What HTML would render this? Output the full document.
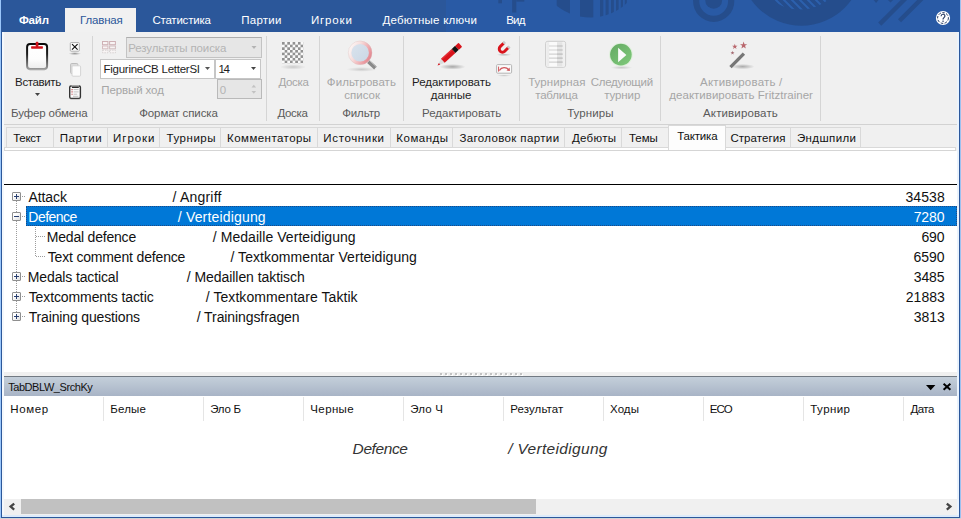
<!DOCTYPE html>
<html>
<head>
<meta charset="utf-8">
<title>TabDBLW_SrchKy</title>
<style>
*{box-sizing:border-box;margin:0;padding:0}
html,body{width:961px;height:519px;overflow:hidden;background:#fff}
body{font-family:"Liberation Sans",sans-serif;font-size:12px;color:#1e1e1e;position:relative}
.a{position:absolute}
.t{position:absolute;white-space:nowrap}
svg{position:absolute;overflow:visible}
.sep{position:absolute;top:36px;width:1px;height:85px;background:#d5d5d5}
.tab{position:absolute;top:127px;height:21px;background:#f0f0f0;border:1px solid #d9d9d9}
.cd{position:absolute;top:397px;width:1px;height:24px;background:#e5e5e5}
</style>
</head>
<body>
<!-- window borders -->
<div class="a" style="left:0;top:0;width:1px;height:519px;background:#9ac6fa"></div>
<div class="a" style="left:1px;top:0;width:1px;height:519px;background:#2b579a"></div>
<div class="a" style="left:2px;top:32px;width:2px;height:485px;background:#f4f8fc"></div>
<div class="a" style="left:957px;top:32px;width:2px;height:485px;background:#eaf3fd"></div>
<div class="a" style="left:959px;top:32px;width:1px;height:487px;background:#2b579a"></div>
<div class="a" style="left:960px;top:0;width:1px;height:519px;background:#9dc1f0"></div>
<!-- header -->
<div class="a" style="left:1px;top:0;width:445px;height:32px;background:#2b579a"></div>
<div class="a" style="left:446px;top:0;width:514px;height:32px;background:#295aa5"></div>
<div class="a" style="left:65px;top:8px;width:71px;height:25px;background:#f1f1f1"></div>
<!-- ribbon -->
<div class="a" style="left:4px;top:32px;width:953px;height:93px;background:#f0f0f0;border-bottom:1px solid #d2d2d2"></div>
<div class="sep" style="left:92px"></div>
<div class="sep" style="left:266px"></div>
<div class="sep" style="left:319px"></div>
<div class="sep" style="left:403px"></div>
<div class="sep" style="left:519px"></div>
<div class="sep" style="left:660px"></div>
<div class="sep" style="left:820px"></div>
<!-- tab strip -->
<div class="a" style="left:4px;top:125px;width:953px;height:26px;background:#f0f0f0"></div>
<div class="a" style="left:5px;top:148px;width:950px;height:2px;background:#fff"></div>
<div class="a" style="left:4px;top:147px;width:1px;height:4px;background:#d9d9d9"></div>
<div class="a" style="left:955px;top:147px;width:1px;height:4px;background:#d9d9d9"></div>
<div class="a" style="left:4px;top:150px;width:952px;height:1px;background:#d5d5d5"></div>
<div class="a" style="left:4px;top:147px;width:952px;height:1px;background:#d9d9d9"></div>
<div class="tab" style="left:6px;width:48px"></div>
<div class="tab" style="left:53px;width:55px"></div>
<div class="tab" style="left:107px;width:53px"></div>
<div class="tab" style="left:159px;width:62px"></div>
<div class="tab" style="left:220px;width:98px"></div>
<div class="tab" style="left:317px;width:74px"></div>
<div class="tab" style="left:390px;width:63px"></div>
<div class="tab" style="left:452px;width:113px"></div>
<div class="tab" style="left:564px;width:58px"></div>
<div class="tab" style="left:621px;width:48px"></div>
<div class="tab" style="left:725px;width:66px"></div>
<div class="tab" style="left:790px;width:71px"></div>
<div class="a" style="left:668px;top:125px;width:58px;height:25px;background:#fdfdfd;border:1px solid #d9d9d9;border-bottom:none"></div>
<!-- tree area -->
<div class="a" style="left:4px;top:151px;width:953px;height:221px;background:#fff"></div>
<div class="a" style="left:4px;top:184px;width:953px;height:1px;background:#000"></div>
<div class="a" style="left:26px;top:206px;width:931px;height:20px;background:#0078d7;outline:1px dotted #1d4a86;outline-offset:-1px"></div>
<!-- bottom panel -->
<div class="a" style="left:4px;top:372px;width:953px;height:5px;background:#f0f0f0"></div>
<div class="a" style="left:4px;top:376px;width:953px;height:1px;background:#727a83"></div>
<div class="a" style="left:4px;top:377px;width:953px;height:19px;background:linear-gradient(#c4cfda,#a8b4c6)"></div>
<div class="cd" style="left:103px"></div>
<div class="cd" style="left:203px"></div>
<div class="cd" style="left:303px"></div>
<div class="cd" style="left:403px"></div>
<div class="cd" style="left:503px"></div>
<div class="cd" style="left:603px"></div>
<div class="cd" style="left:703px"></div>
<div class="cd" style="left:803px"></div>
<div class="cd" style="left:903px"></div>
<!-- scrollbar -->
<div class="a" style="left:4px;top:499px;width:953px;height:16px;background:#f0f0f0"></div>
<div class="a" style="left:21px;top:499px;width:515px;height:15px;background:#c1c1c1"></div>
<div class="a" style="left:2px;top:515px;width:957px;height:2px;background:#dcebfa"></div>
<div class="a" style="left:1px;top:517px;width:959px;height:1px;background:#2b579a"></div>
<div class="a" style="left:0;top:518px;width:961px;height:1px;background:#d4d4d4"></div>

<svg style="left:0;top:0" width="961" height="32" viewBox="0 0 961 32">
<defs>
  <clipPath id="hc"><rect x="1" y="0" width="959" height="32"/></clipPath>
  <clipPath id="gl"><circle cx="590.3" cy="-35.7" r="53.3"/></clipPath>
  <clipPath id="bc"><circle cx="800" cy="-36.5" r="46"/></clipPath>
</defs>
<g clip-path="url(#hc)" fill="#254d8c">
  <rect x="498.3" y="0" width="3.7" height="3.3"/>
  <rect x="512.2" y="0" width="4.1" height="12.5"/>
  <rect x="516.3" y="0" width="8" height="1.6"/>
  <g clip-path="url(#gl)">
    <rect x="556.7" y="0" width="13.3" height="20"/>
    <rect x="580" y="0" width="13.3" height="20"/>
    <rect x="600" y="0" width="3.3" height="20"/>
    <rect x="605.6" y="0" width="3" height="20"/>
    <rect x="611" y="0" width="2.8" height="20"/>
    <rect x="616" y="0" width="2.6" height="20"/>
    <rect x="620.8" y="0" width="2.2" height="20"/>
    <rect x="624.8" y="0" width="2" height="20"/>
  </g>
  <circle cx="713.7" cy="1.3" r="17.5" fill="none" stroke="#254d8c" stroke-width="6.2"/>
  <circle cx="713.7" cy="0.4" r="8.4"/>
  <circle cx="801.3" cy="-35.8" r="61.5"/>
  <g clip-path="url(#bc)" stroke="#2c60ad" stroke-width="2" fill="none">
    <path d="M762 -6l20 20M770 -6l20 20M778 -6l20 20M786 -6l20 20M794 -6l20 20M802 -6l20 20M810 -6l20 20M818 -6l20 20"/>
  </g>
  <path d="M878.2 22.6L900.8 0h6.2L881.3 25.7z"/>
  <path d="M898 19.2L917.2 0h6.2L901.1 22.3z"/>
  <path d="M873.7 0h4.8l-2.4 3z"/>
  <path d="M887.9 0h5.2l-2.6 2.6z"/>
</g>
</svg>

<!-- combos -->
<div class="a" style="left:126px;top:37px;width:136px;height:21px;background:#e6e6e6;border:1px solid #c3c3c3;border-top-color:#adadad"></div>
<div class="a" style="left:100px;top:59px;width:115px;height:20px;background:#fff;border:1px solid #c6c6c6"></div>
<div class="a" style="left:215px;top:59px;width:46px;height:20px;background:#fff;border:1px solid #c6c6c6"></div>
<div class="a" style="left:217px;top:79px;width:45px;height:20px;background:#e6e6e6;border:1px solid #b9b9b9"></div>
<svg style="left:0;top:0" width="961" height="130" viewBox="0 0 961 130">
  <!-- combo arrows -->
  <path d="M251.5 46h5l-2.5 3z" fill="#b3b3b3"/>
  <path d="M205 67h5l-2.5 3z" fill="#555"/>
  <path d="M251 67h5l-2.5 3z" fill="#444"/>
  <path d="M251.5 87.5h4.6l-2.3-2.8z" fill="#c2c2c2"/>
  <path d="M251.5 91h4.6l-2.3 2.8z" fill="#c2c2c2"/>
  <path d="M35 93h5l-2.5 3z" fill="#444"/>
  <!-- grid icon (disabled) -->
  <g fill="#f8f4f4" stroke="#cfb1b5" stroke-width="1">
    <rect x="102.5" y="41.5" width="5.4" height="3.2"/><rect x="109.6" y="41.5" width="5.8" height="3.2"/>
    <rect x="102.5" y="46" width="5.4" height="2.8" stroke="#d6bcbf"/><rect x="109.6" y="46" width="5.8" height="2.8" stroke="#d0bcbe"/>
    <rect x="102.5" y="50.2" width="5.4" height="2.6" stroke="#d6d0d0" stroke-dasharray="1.5 1"/><rect x="109.6" y="50.2" width="5.8" height="2.6" stroke="#d6d0d0" stroke-dasharray="1.5 1"/>
  </g>
</svg>

<svg style="left:0;top:0" width="961" height="130" viewBox="0 0 961 130">
<defs>
  <radialGradient id="sh"><stop offset="0" stop-color="#000" stop-opacity=".38"/><stop offset="1" stop-color="#000" stop-opacity="0"/></radialGradient>
  <radialGradient id="shl"><stop offset="0" stop-color="#000" stop-opacity=".16"/><stop offset="1" stop-color="#000" stop-opacity="0"/></radialGradient>
  <linearGradient id="pg" x1="0" y1="0" x2="0" y2="1"><stop offset="0" stop-color="#fff"/><stop offset=".6" stop-color="#fdfdfd"/><stop offset="1" stop-color="#ececec"/></linearGradient>
  <linearGradient id="cb" x1="0" y1="0" x2="0" y2="1"><stop offset="0" stop-color="#0a0a0a"/><stop offset=".4" stop-color="#1c1c1c"/><stop offset=".8" stop-color="#6e6e6e"/><stop offset="1" stop-color="#9a9a9a"/></linearGradient>
  <linearGradient id="ring" x1="0" y1=".25" x2="1" y2=".75"><stop offset="0" stop-color="#fcf6f5"/><stop offset=".35" stop-color="#f7dcdb"/><stop offset=".75" stop-color="#eea5aa"/><stop offset="1" stop-color="#e2868f"/></linearGradient>
  <linearGradient id="lens" x1="0" y1="0" x2="1" y2="1"><stop offset="0" stop-color="#dbe4ee"/><stop offset="1" stop-color="#c9d6e4"/></linearGradient>
  <linearGradient id="grn" x1="0" y1="0" x2="1" y2="1"><stop offset="0" stop-color="#64a963"/><stop offset="1" stop-color="#80ca7b"/></linearGradient>
  <pattern id="chk" x="282" y="42" width="5.3" height="5.3" patternUnits="userSpaceOnUse">
    <rect width="5.3" height="5.3" fill="#fbfbfb"/><rect width="2.65" height="2.65" fill="#8a8a8a"/><rect x="2.65" y="2.65" width="2.65" height="2.65" fill="#8a8a8a"/>
  </pattern>
</defs>
<!-- paste (clipboard) -->
<rect x="27.1" y="43.9" width="20" height="25" rx="3" fill="url(#pg)" stroke="url(#cb)" stroke-width="2"/>
<path d="M29.4 69.9h15.4" stroke="#b5b5b5" stroke-width=".9"/>
<rect x="31.1" y="46.2" width="11.8" height="2.5" rx=".6" fill="#d3131b"/>
<rect x="35.7" y="41.8" width="2.7" height="5.2" rx=".9" fill="#d3131b"/>
<!-- small: delete box -->
<ellipse cx="74.8" cy="53.6" rx="6.2" ry="1.5" fill="url(#sh)"/>
<rect x="70.3" y="42.6" width="9" height="8.6" rx=".8" fill="#fff" stroke="#a6a6a6" stroke-width=".9"/>
<path d="M72 44.1l5.6 5.6M77.6 44.1l-5.6 5.6" stroke="#111" stroke-width="1.15" fill="none"/>
<!-- small: copy (disabled) -->
<rect x="70.6" y="63.5" width="7.2" height="10" rx="1" fill="#dcdcdc" stroke="#bdbdbd"/>
<rect x="72" y="65.8" width="8.6" height="10.4" rx="1" fill="#fcfcfc" stroke="#d4d4d4"/>
<!-- small: clipboard list -->
<rect x="69.7" y="86" width="10.7" height="12.4" rx="1.3" fill="#fbfbfb" stroke="#343434" stroke-width="1.4"/>
<rect x="71.4" y="85.2" width="7.6" height="1.5" fill="#b9b9b9"/>
<rect x="71.9" y="86.7" width="6.9" height="1.2" fill="#151515"/>
<path d="M71.2 89.6h1.8M71.2 91.9h1.8M71.2 94.2h1.8" stroke="#d88e91" stroke-width="1.1"/>
<path d="M73.6 89.6h5M73.6 91.9h5M73.6 94.2h3.6M73 96.3h5.4" stroke="#c3c3c3" stroke-width="1"/>
<path d="M70.4 99.4h9.4" stroke="#bdbdbd" stroke-width=".8"/>
<!-- board -->
<ellipse cx="293" cy="67" rx="13" ry="2.6" fill="url(#shl)"/>
<rect x="282" y="42" width="21.2" height="21.2" fill="url(#chk)" opacity=".92"/>
<!-- magnifier -->
<ellipse cx="361.5" cy="69.4" rx="15" ry="2.4" fill="url(#shl)"/>
<path d="M368.4 61.6l7 6.4" stroke="#8a8a8a" stroke-width="3.8" stroke-linecap="butt"/>
<path d="M369.8 60.9l6.6 6" stroke="#bcbcbc" stroke-width="1"/>
<circle cx="360.1" cy="52.8" r="10.4" fill="url(#lens)" stroke="url(#ring)" stroke-width="3.2"/>
<circle cx="360.1" cy="52.8" r="11.8" fill="none" stroke="#d9c3c3" stroke-width=".5" opacity=".8"/>
<!-- pencil -->
<ellipse cx="452.5" cy="66.8" rx="13" ry="2.8" fill="url(#sh)" opacity=".8"/>
<g transform="translate(437.6 65.4) rotate(-42.2)">
  <path d="M0 0L7.1 -2.7V2.7z" fill="#dcdcdc"/>
  <path d="M0 0L2.6 -1V1z" fill="#d3131b"/>
  <rect x="7.1" y="-2.7" width="14.5" height="5.4" fill="#d8131b"/>
  <rect x="7.1" y="-2.7" width="14.5" height="1.5" fill="#ee4248" opacity=".55"/>
  <rect x="21.6" y="-2.7" width="4.5" height="5.4" fill="#111"/>
  <rect x="26.1" y="-2.7" width="4.6" height="5.4" rx=".7" fill="#d8131b"/>
</g>
<!-- magnet -->
<ellipse cx="504" cy="54.8" rx="7.5" ry="1.2" fill="url(#sh)" opacity=".7"/>
<g transform="translate(502.7 48.7) rotate(45) scale(.87)">
  <path d="M-5.4 -5.6V0.4a5.4 5.4 0 0 0 10.8 0V-5.6H2V0.4a2 2 0 0 1 -4 0V-5.6z" fill="#d9141c"/>
  <rect x="-5.4" y="-7.4" width="3.4" height="2.6" fill="#c9c9c9"/><rect x="2" y="-7.4" width="3.4" height="2.6" fill="#c9c9c9"/>
</g>
<!-- flip -->
<ellipse cx="504" cy="75.6" rx="7" ry="1.2" fill="url(#shl)"/>
<rect x="496.6" y="64.6" width="15" height="8.6" rx="1" fill="#fafafa" stroke="#b5b5b5"/>
<path d="M499.4 70.5c2-3.6 7-3.6 9.4-.6" fill="none" stroke="#d0555a" stroke-width="1.3"/>
<path d="M509.6 67.4l.3 3.6-3.4-.6z" fill="#d0555a"/>
<path d="M498.6 66.6v5" stroke="#d0555a" stroke-width="1"/>
<!-- tournament table (disabled) -->
<rect x="545.6" y="41.3" width="20" height="26" rx="2.2" fill="#fafafa" stroke="#c6c6c6" stroke-width=".9"/>
<rect x="546.4" y="42.2" width="2.8" height="24.2" fill="#ececec"/>
<rect x="563" y="42.2" width="1.9" height="24.2" fill="#f0f0f0"/>
<rect x="557" y="42.2" width="5.6" height="24.2" fill="#e4e4e4"/>
<path d="M549 46h13.6M549 50h13.6M549 54.1h13.6M549 58.2h13.6M549 62.2h13.6" stroke="#d2d2d2" stroke-width="1.2"/>
<path d="M557 46h5.6M557 50h5.6M557 54.1h5.6M557 58.2h5.6M557 62.2h5.6" stroke="#c2c2c2" stroke-width="1.2"/>
<!-- play -->
<ellipse cx="621.5" cy="67.6" rx="11" ry="1.8" fill="url(#shl)"/>
<circle cx="620.9" cy="54.6" r="11.9" fill="#dff0dc"/>
<circle cx="620.9" cy="54.6" r="10.8" fill="url(#grn)"/>
<path d="M618.1 47.8V62.3L626.4 55z" fill="#fbfbfb"/>
<!-- wand -->
<ellipse cx="742.6" cy="66.6" rx="12" ry="2.7" fill="url(#sh)" opacity=".75"/>
<path d="M730.5 67.1L743.9 53.7" stroke="#767676" stroke-width="3.3"/>
<g fill="#b9676d">
<path id="st" d="M0 -3.6L.85 -1.15 3.42 -1.1 1.37 .45 2.12 2.9 0 1.45 -2.12 2.9 -1.37 .45 -3.42 -1.1 -.85 -1.15z" transform="translate(743.6 45.4) scale(1.05)"/>
<path d="M0 -3.6L.85 -1.15 3.42 -1.1 1.37 .45 2.12 2.9 0 1.45 -2.12 2.9 -1.37 .45 -3.42 -1.1 -.85 -1.15z" transform="translate(734.8 46.7) scale(.8)"/>
<path d="M0 -3.6L.85 -1.15 3.42 -1.1 1.37 .45 2.12 2.9 0 1.45 -2.12 2.9 -1.37 .45 -3.42 -1.1 -.85 -1.15z" transform="translate(732.5 52.9) scale(.58)" fill="#a56b72"/>
</g>
</svg>

<!-- tree connectors -->
<style>
.vd{position:absolute;width:1px;background:repeating-linear-gradient(to bottom,#9c9c9c 0 1px,transparent 1px 2px)}
.hd{position:absolute;height:1px;background:repeating-linear-gradient(to right,#9c9c9c 0 1px,transparent 1px 2px)}
.bx{position:absolute;left:12px;width:9px;height:9px;border:1px solid #8f8f8f;border-radius:1px;background:linear-gradient(135deg,#fff 30%,#dcdcdc)}
.bx i{position:absolute;left:1px;top:3px;width:5px;height:1px;background:#2a3f6f}
.bx b{position:absolute;left:3px;top:1px;width:1px;height:5px;background:#2a3f6f}
</style>
<div class="vd" style="left:16px;top:201px;height:11px"></div>
<div class="vd" style="left:16px;top:221px;height:51px"></div>
<div class="vd" style="left:16px;top:281px;height:11px"></div>
<div class="vd" style="left:16px;top:301px;height:11px"></div>
<div class="hd" style="left:22px;top:196px;width:4px"></div>
<div class="hd" style="left:22px;top:216px;width:4px"></div>
<div class="hd" style="left:22px;top:276px;width:4px"></div>
<div class="hd" style="left:22px;top:296px;width:4px"></div>
<div class="hd" style="left:22px;top:316px;width:4px"></div>
<div class="vd" style="left:35px;top:227px;height:30px"></div>
<div class="hd" style="left:36px;top:236px;width:9px"></div>
<div class="hd" style="left:36px;top:256px;width:9px"></div>
<div class="bx" style="top:192px"><i></i><b></b></div>
<div class="bx" style="top:212px"><i></i></div>
<div class="bx" style="top:272px"><i></i><b></b></div>
<div class="bx" style="top:292px"><i></i><b></b></div>
<div class="bx" style="top:312px"><i></i><b></b></div>
<!-- splitter gripper -->
<div class="a" style="left:441px;top:374px;width:84px;height:2px;background:repeating-linear-gradient(to right,#fff 0 2px,transparent 2px 5px)"></div>
<div class="a" style="left:440px;top:373px;width:84px;height:2px;background:repeating-linear-gradient(to right,#c2c2c2 0 2px,transparent 2px 5px)"></div>
<svg style="left:0;top:0" width="961" height="519" viewBox="0 0 961 519">
  <!-- panel title icons -->
  <path d="M926 385h9.4l-4.7 5.2z" fill="#000"/>
  <path d="M943.6 383.8l6.8 6M950.4 383.8l-6.8 6" stroke="#000" stroke-width="2" fill="none"/>
  <!-- scroll arrows -->
  <path d="M14.2 503.6l-3.6 3 3.6 3" stroke="#444" stroke-width="2.3" fill="none"/>
  <path d="M946.8 503.6l3.6 3-3.6 3" stroke="#444" stroke-width="2.3" fill="none"/>
  <!-- help -->
  <circle cx="943" cy="18" r="7.1" fill="#fff"/>
  <circle cx="943" cy="18" r="5.4" fill="none" stroke="#2c3f66" stroke-width="1" stroke-dasharray="2.6 1.4"/>
  <path d="M941.1 16.2c0-2.6 3.8-2.6 3.8-.2 0 1.5-1.9 1.7-1.9 3.4" fill="none" stroke="#2c3f66" stroke-width="1.2"/>
  <rect x="942.4" y="20.6" width="1.3" height="1.3" fill="#2c3f66"/>
</svg>

<!-- text -->
<div class="t" style="left:19.03px;top:13px;font-size:11.5px;line-height:14px;color:#ffffff;letter-spacing:-0.209px;font-weight:bold;">Файл</div>
<div class="t" style="left:80.09px;top:13px;font-size:11.5px;line-height:14px;color:#2b579a;letter-spacing:-0.180px;">Главная</div>
<div class="t" style="left:152.39px;top:13px;font-size:11.5px;line-height:14px;color:#ffffff;letter-spacing:-0.212px;">Статистика</div>
<div class="t" style="left:241.22px;top:13px;font-size:11.5px;line-height:14px;color:#ffffff;letter-spacing:0.260px;">Партии</div>
<div class="t" style="left:310.91px;top:13px;font-size:11.5px;line-height:14px;color:#ffffff;letter-spacing:0.861px;">Игроки</div>
<div class="t" style="left:382.46px;top:13px;font-size:11.5px;line-height:14px;color:#ffffff;letter-spacing:0.250px;">Дебютные ключи</div>
<div class="t" style="left:506.22px;top:13px;font-size:11.5px;line-height:14px;color:#ffffff;letter-spacing:-0.780px;">Вид</div>
<div class="t" style="left:15.10px;top:75px;font-size:11.5px;line-height:14px;color:#1e1e1e;letter-spacing:-0.382px;">Вставить</div>
<div class="t" style="left:278.46px;top:75px;font-size:11.5px;line-height:14px;color:#a6a6a6;letter-spacing:-0.324px;">Доска</div>
<div class="t" style="left:326.86px;top:75px;font-size:11.5px;line-height:14px;color:#a6a6a6;letter-spacing:0.067px;">Фильтровать</div>
<div class="t" style="left:344.35px;top:88px;font-size:11.5px;line-height:14px;color:#a6a6a6;letter-spacing:-0.017px;">список</div>
<div class="t" style="left:412.10px;top:75px;font-size:11.5px;line-height:14px;color:#1e1e1e;letter-spacing:-0.053px;">Редактировать</div>
<div class="t" style="left:430.83px;top:88px;font-size:11.5px;line-height:14px;color:#1e1e1e;letter-spacing:-0.002px;">данные</div>
<div class="t" style="left:528.17px;top:75px;font-size:11.5px;line-height:14px;color:#a6a6a6;letter-spacing:0.088px;">Турнирная</div>
<div class="t" style="left:535.16px;top:88px;font-size:11.5px;line-height:14px;color:#a6a6a6;letter-spacing:-0.165px;">таблица</div>
<div class="t" style="left:590.72px;top:75px;font-size:11.5px;line-height:14px;color:#a6a6a6;letter-spacing:-0.268px;">Следующий</div>
<div class="t" style="left:604.16px;top:88px;font-size:11.5px;line-height:14px;color:#a6a6a6;letter-spacing:-0.089px;">турнир</div>
<div class="t" style="left:700.04px;top:75px;font-size:11.5px;line-height:14px;color:#a6a6a6;letter-spacing:0.197px;">Активировать /</div>
<div class="t" style="left:669.37px;top:88px;font-size:11.5px;line-height:14px;color:#a6a6a6;letter-spacing:0.014px;">деактивировать Fritztrainer</div>
<div class="t" style="left:11.10px;top:106px;font-size:11.5px;line-height:14px;color:#5a5a5a;letter-spacing:-0.150px;">Буфер обмена</div>
<div class="t" style="left:139.15px;top:106px;font-size:11.5px;line-height:14px;color:#5a5a5a;letter-spacing:-0.095px;">Формат списка</div>
<div class="t" style="left:277.46px;top:106px;font-size:11.5px;line-height:14px;color:#5a5a5a;letter-spacing:-0.324px;">Доска</div>
<div class="t" style="left:342.15px;top:106px;font-size:11.5px;line-height:14px;color:#5a5a5a;letter-spacing:-0.103px;">Фильтр</div>
<div class="t" style="left:422.10px;top:106px;font-size:11.5px;line-height:14px;color:#5a5a5a;letter-spacing:-0.017px;">Редактировать</div>
<div class="t" style="left:567.17px;top:106px;font-size:11.5px;line-height:14px;color:#5a5a5a;letter-spacing:0.069px;">Турниры</div>
<div class="t" style="left:703.04px;top:106px;font-size:11.5px;line-height:14px;color:#5a5a5a;letter-spacing:0.140px;">Активировать</div>
<div class="t" style="left:128.22px;top:41px;font-size:11.5px;line-height:14px;color:#b4b4b4;letter-spacing:-0.135px;">Результаты поиска</div>
<div class="t" style="left:103.41px;top:62px;font-size:11.5px;line-height:14px;color:#1e1e1e;letter-spacing:-0.241px;">FigurineCB LetterSI</div>
<div class="t" style="left:218.62px;top:62px;font-size:11.5px;line-height:14px;color:#1e1e1e;letter-spacing:-1.392px;">14</div>
<div class="t" style="left:101.22px;top:83px;font-size:11.5px;line-height:14px;color:#a6a6a6;letter-spacing:-0.098px;">Первый ход</div>
<div class="t" style="left:219.83px;top:83px;font-size:11.5px;line-height:14px;color:#b4b4b4;letter-spacing:-0.867px;">0</div>
<div class="t" style="left:13.17px;top:131px;font-size:11.5px;line-height:14px;color:#111111;letter-spacing:-0.265px;">Текст</div>
<div class="t" style="left:59.77px;top:131px;font-size:11.5px;line-height:14px;color:#111111;letter-spacing:0.583px;">Партии</div>
<div class="t" style="left:113.09px;top:131px;font-size:11.5px;line-height:14px;color:#111111;letter-spacing:0.940px;">Игроки</div>
<div class="t" style="left:166.52px;top:131px;font-size:11.5px;line-height:14px;color:#111111;letter-spacing:0.532px;">Турниры</div>
<div class="t" style="left:227.09px;top:131px;font-size:11.5px;line-height:14px;color:#111111;letter-spacing:0.445px;">Комментаторы</div>
<div class="t" style="left:323.32px;top:131px;font-size:11.5px;line-height:14px;color:#111111;letter-spacing:0.650px;">Источники</div>
<div class="t" style="left:396.32px;top:131px;font-size:11.5px;line-height:14px;color:#111111;letter-spacing:0.497px;">Команды</div>
<div class="t" style="left:459.40px;top:131px;font-size:11.5px;line-height:14px;color:#111111;letter-spacing:0.368px;">Заголовок партии</div>
<div class="t" style="left:571.90px;top:131px;font-size:11.5px;line-height:14px;color:#111111;letter-spacing:0.329px;">Дебюты</div>
<div class="t" style="left:629.06px;top:131px;font-size:11.5px;line-height:14px;color:#111111;letter-spacing:-0.086px;">Темы</div>
<div class="t" style="left:677.17px;top:129px;font-size:11.5px;line-height:14px;color:#111111;letter-spacing:-0.175px;">Тактика</div>
<div class="t" style="left:730.39px;top:131px;font-size:11.5px;line-height:14px;color:#111111;letter-spacing:0.065px;">Стратегия</div>
<div class="t" style="left:796.98px;top:131px;font-size:11.5px;line-height:14px;color:#111111;letter-spacing:0.388px;">Эндшпили</div>
<div class="t" style="left:28.53px;top:187px;font-size:14px;line-height:20px;color:#111111;letter-spacing:-0.089px;">Attack</div>
<div class="t" style="left:172.45px;top:187px;font-size:14px;line-height:20px;color:#111111;letter-spacing:0.225px;">/ Angriff</div>
<div class="t" style="left:28.35px;top:207px;font-size:14px;line-height:20px;color:#ffffff;letter-spacing:-0.518px;">Defence</div>
<div class="t" style="left:177.79px;top:207px;font-size:14px;line-height:20px;color:#ffffff;letter-spacing:0.171px;">/ Verteidigung</div>
<div class="t" style="left:46.78px;top:227px;font-size:14px;line-height:20px;color:#111111;letter-spacing:-0.200px;">Medal defence</div>
<div class="t" style="left:212.79px;top:227px;font-size:14px;line-height:20px;color:#111111;letter-spacing:0.056px;">/ Medaille Verteidigung</div>
<div class="t" style="left:47.68px;top:247px;font-size:14px;line-height:20px;color:#111111;letter-spacing:-0.166px;">Text comment defence</div>
<div class="t" style="left:230.45px;top:247px;font-size:14px;line-height:20px;color:#111111;letter-spacing:0.056px;">/ Textkommentar Verteidigung</div>
<div class="t" style="left:27.78px;top:267px;font-size:14px;line-height:20px;color:#111111;letter-spacing:-0.125px;">Medals tactical</div>
<div class="t" style="left:186.79px;top:267px;font-size:14px;line-height:20px;color:#111111;letter-spacing:-0.059px;">/ Medaillen taktisch</div>
<div class="t" style="left:28.68px;top:287px;font-size:14px;line-height:20px;color:#111111;letter-spacing:-0.101px;">Textcomments tactic</div>
<div class="t" style="left:205.79px;top:287px;font-size:14px;line-height:20px;color:#111111;letter-spacing:0.063px;">/ Textkommentare Taktik</div>
<div class="t" style="left:28.68px;top:307px;font-size:14px;line-height:20px;color:#111111;letter-spacing:-0.143px;">Training questions</div>
<div class="t" style="left:196.79px;top:307px;font-size:14px;line-height:20px;color:#111111;letter-spacing:-0.092px;">/ Trainingsfragen</div>
<div class="t" style="left:905.38px;top:187px;font-size:14px;line-height:20px;color:#111111;letter-spacing:0.100px;">34538</div>
<div class="t" style="left:913.67px;top:207px;font-size:14px;line-height:20px;color:#ffffff;letter-spacing:-0.115px;">7280</div>
<div class="t" style="left:921.39px;top:227px;font-size:14px;line-height:20px;color:#111111;letter-spacing:-0.131px;">690</div>
<div class="t" style="left:913.60px;top:247px;font-size:14px;line-height:20px;color:#111111;letter-spacing:-0.092px;">6590</div>
<div class="t" style="left:913.68px;top:267px;font-size:14px;line-height:20px;color:#111111;letter-spacing:-0.080px;">3485</div>
<div class="t" style="left:905.84px;top:287px;font-size:14px;line-height:20px;color:#111111;letter-spacing:0.005px;">21883</div>
<div class="t" style="left:913.68px;top:307px;font-size:14px;line-height:20px;color:#111111;letter-spacing:-0.039px;">3813</div>
<div class="t" style="left:8.20px;top:381px;font-size:11px;line-height:13px;color:#111;letter-spacing:-0.437px;">TabDBLW_SrchKy</div>
<div class="t" style="left:10.22px;top:402px;font-size:11.5px;line-height:14px;color:#111111;letter-spacing:0.629px;">Номер</div>
<div class="t" style="left:110.22px;top:402px;font-size:11.5px;line-height:14px;color:#111111;letter-spacing:0.209px;">Белые</div>
<div class="t" style="left:210.16px;top:402px;font-size:11.5px;line-height:14px;color:#111111;letter-spacing:-0.249px;">Эло Б</div>
<div class="t" style="left:310.35px;top:402px;font-size:11.5px;line-height:14px;color:#111111;letter-spacing:0.364px;">Черные</div>
<div class="t" style="left:410.16px;top:402px;font-size:11.5px;line-height:14px;color:#111111;letter-spacing:0.225px;">Эло Ч</div>
<div class="t" style="left:510.22px;top:402px;font-size:11.5px;line-height:14px;color:#111111;letter-spacing:0.104px;">Результат</div>
<div class="t" style="left:610.01px;top:402px;font-size:11.5px;line-height:14px;color:#111111;letter-spacing:0.093px;">Ходы</div>
<div class="t" style="left:709.77px;top:402px;font-size:11.5px;line-height:14px;color:#111111;letter-spacing:-0.978px;">ECO</div>
<div class="t" style="left:810.34px;top:402px;font-size:11.5px;line-height:14px;color:#111111;letter-spacing:0.414px;">Турнир</div>
<div class="t" style="left:910.46px;top:402px;font-size:11.5px;line-height:14px;color:#111111;letter-spacing:-0.544px;">Дата</div>
<div class="t" style="left:352.60px;top:439px;font-size:15.5px;line-height:20px;color:#333;letter-spacing:-0.393px;font-style:italic;">Defence</div>
<div class="t" style="left:508.23px;top:439px;font-size:15.5px;line-height:20px;color:#333;letter-spacing:0.321px;font-style:italic;">/ Verteidigung</div>
</body>
</html>
